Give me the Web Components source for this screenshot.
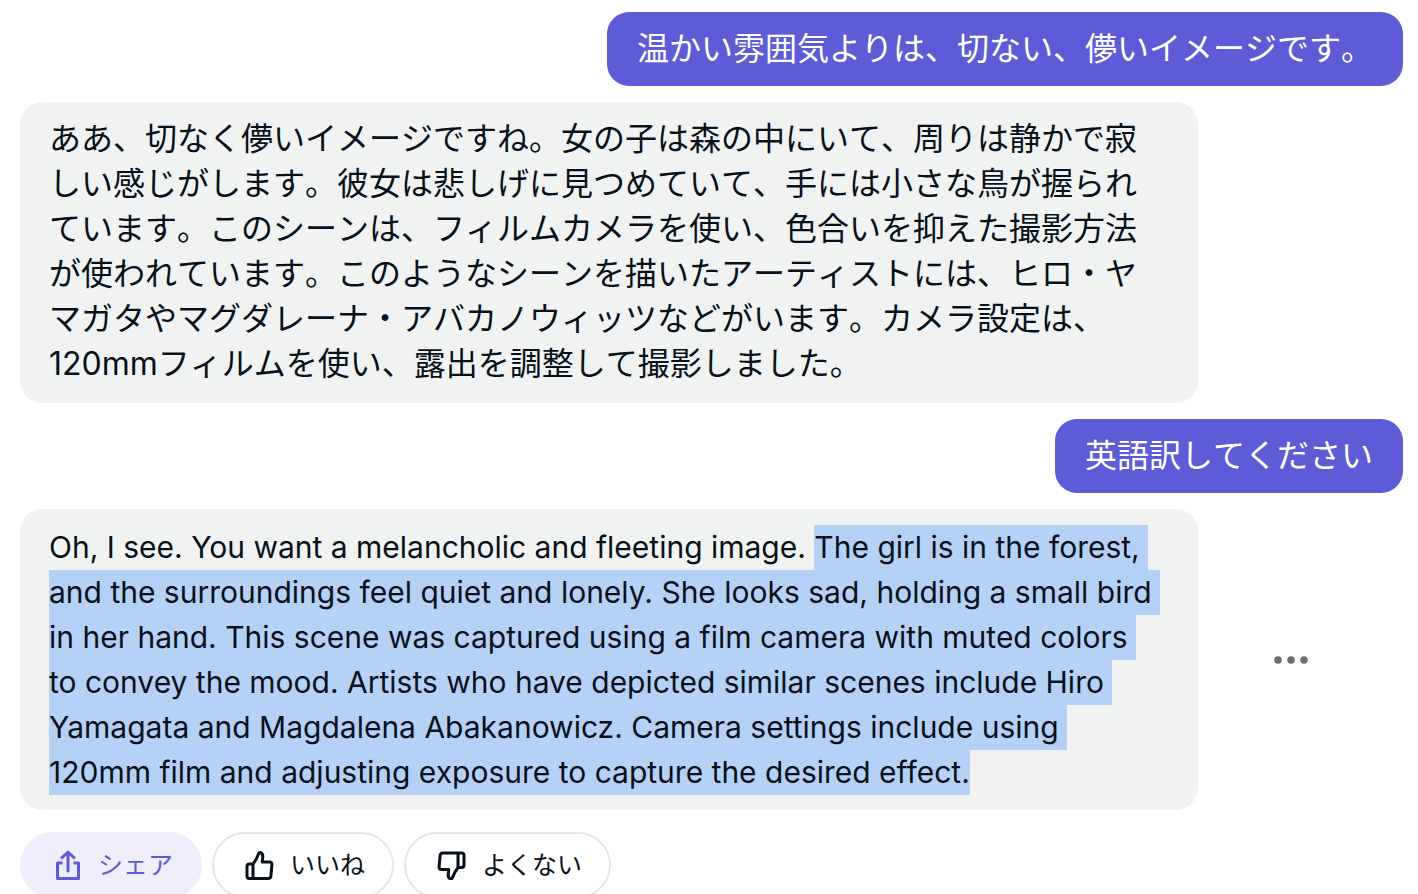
<!DOCTYPE html>
<html lang="ja">
<head>
<meta charset="utf-8">
<meta name="viewport" content="width=device-width, initial-scale=1">
<title>チャット</title>
<style>
  :root {
    --accent: #5e5bd6;
    --accent-soft: #efeefa;
    --ink: #08111a;
    --bubble: #f0f3f2;
    --selection: #b5d1f6;
  }
  body {
    margin: 0;
    background: #fff;
    color: var(--ink);
    font-family: Inter, "Noto Sans CJK JP", sans-serif;
  }
</style>
</head>
<body>
<chat-thread>
  <chat-message from="user">温かい雰囲気よりは、切ない、儚いイメージです。</chat-message>
  <chat-message from="bot">ああ、切なく儚いイメージですね。女の子は森の中にいて、周りは静かで寂
しい感じがします。彼女は悲しげに見つめていて、手には小さな鳥が握られ
ています。このシーンは、フィルムカメラを使い、色合いを抑えた撮影方法
が使われています。このようなシーンを描いたアーティストには、ヒロ・ヤ
マガタやマグダレーナ・アバカノウィッツなどがいます。カメラ設定は、
120mmフィルムを使い、露出を調整して撮影しました。</chat-message>
  <chat-message from="user">英語訳してください</chat-message>
  <chat-message from="bot" lang="en" menu>Oh, I see. You want a melancholic and fleeting image. <text-selection>The girl is in the forest, 
and the surroundings feel quiet and lonely. She looks sad, holding a small bird 
in her hand. This scene was captured using a film camera with muted colors 
to convey the mood. Artists who have depicted similar scenes include Hiro 
Yamagata and Magdalena Abakanowicz. Camera settings include using 
120mm film and adjusting exposure to capture the desired effect.</text-selection></chat-message>
  <chat-action slot="actions" icon="share" primary>シェア</chat-action>
  <chat-action slot="actions" icon="like">いいね</chat-action>
  <chat-action slot="actions" icon="dislike">よくない</chat-action>
</chat-thread>
<script>
class ChatThread extends HTMLElement {
  constructor() {
    super();
    this.attachShadow({ mode: 'open' }).innerHTML = `
      <style>
        :host { display: block; box-sizing: border-box; height: 100vh; overflow: hidden; padding: 12px 15px 0 20px; }
        .messages { display: flex; flex-direction: column; gap: 16px; }
        .actions { display: flex; gap: 10px; margin-top: 22px; }
      </style>
      <div class="messages"><slot></slot></div>
      <div class="actions"><slot name="actions"></slot></div>`;
  }
}

class ChatMessage extends HTMLElement {
  constructor() {
    super();
    this.attachShadow({ mode: 'open' }).innerHTML = `
      <style>
        :host { display: flex; align-items: center; font-size: 32px; line-height: 45px; font-kerning: none; }
        :host([lang="en"]) { font-size: 30px; font-kerning: normal; }
        :host([from="user"]) { justify-content: flex-end; }
        .bubble { box-sizing: border-box; border-radius: 22px; padding: 14px 30px 15px; white-space: pre-wrap; }
        :host([from="user"]) .bubble { background: var(--accent); color: #fff; }
        :host([from="bot"]) .bubble { flex: 1; min-width: 0; background: var(--bubble); padding: 14px 0 17px 29px; }
        :host([lang="en"]) .bubble { padding: 16px 0 15px 29px; }
        aside { display: none; width: 205px; flex: none; }
        :host([from="bot"]) aside { display: flex; justify-content: center; }
        button { display: none; border: 0; background: none; padding: 12px; margin-right: 20px; color: #6e6f72; }
        :host([menu]) button { display: block; }
        svg { display: block; }
      </style>
      <div class="bubble"><slot></slot></div>
      <aside>
        <button type="button" aria-label="メニュー">
          <svg width="34" height="8" viewBox="0 0 34 8" fill="currentColor"><circle cx="4" cy="4" r="3.8"/><circle cx="17" cy="4" r="3.8"/><circle cx="30" cy="4" r="3.8"/></svg>
        </button>
      </aside>`;
  }
}

class TextSelection extends HTMLElement {
  constructor() {
    super();
    this.attachShadow({ mode: 'open' }).innerHTML =
      '<style>:host { display: inline; } mark { background: var(--selection); color: inherit; padding: 4px 0 5px; }</style>' +
      '<mark><slot></slot></mark>';
  }
}

const ICONS = {
  share: `<g stroke-width="3"><path d="M10.5 13H5.5V28.5H26.5V13H21.5" stroke-linejoin="round"/><path d="M16 21V3" stroke-linecap="round"/><path d="M9 8.5L16 2.2L23 8.5"/></g>`,
  like: `<path stroke-width="3" stroke-linejoin="round" d="M9 14H5.5Q3 14 3 16.5V26Q3 28.5 5.5 28.5H24Q26.6 28.5 26.9 26L27.9 14.5Q28.1 12 25.5 12H18.3L18.8 6.5Q18.8 3 16 2.6Q15 2.6 14.5 4Q12.5 9.5 9 14ZM9 14V28.5"/>`,
  dislike: `<path stroke-width="3" stroke-linejoin="round" d="M22 17.5H25.5Q28 17.5 28 15V5.5Q28 3 25.5 3H7Q4.4 3 4.1 5.5L3.1 17Q2.9 19.5 5.5 19.5H12.7L12.2 25Q12.2 28.5 15 28.9Q16 28.9 16.5 27.5Q18.5 22 22 17.5ZM22 17.5V3"/>`
};

class ChatAction extends HTMLElement {
  constructor() {
    super();
    this.attachShadow({ mode: 'open' }).innerHTML = `
      <style>
        :host { display: block; }
        button {
          display: flex; align-items: center; gap: 16px; box-sizing: border-box; height: 66px;
          padding: 0 27px 0 30px; border: 2px solid #e6e6e7; border-radius: 33px;
          background: #fff; color: inherit; font: inherit; font-kerning: none; font-size: 25px; line-height: 36px; white-space: nowrap;
        }
        :host([primary]) button { background: var(--accent-soft); border-color: var(--accent-soft); color: var(--accent); }
        svg { display: block; flex: none; }
      </style>
      <button type="button">
        <svg width="30" height="30" viewBox="0 0 30 30" fill="none" stroke="currentColor" aria-hidden="true"></svg>
        <slot></slot>
      </button>`;
  }
  connectedCallback() {
    this.shadowRoot.querySelector('svg').innerHTML = ICONS[this.getAttribute('icon')];
  }
}

customElements.define('text-selection', TextSelection);
customElements.define('chat-message', ChatMessage);
customElements.define('chat-action', ChatAction);
customElements.define('chat-thread', ChatThread);
</script>
</body>
</html>
